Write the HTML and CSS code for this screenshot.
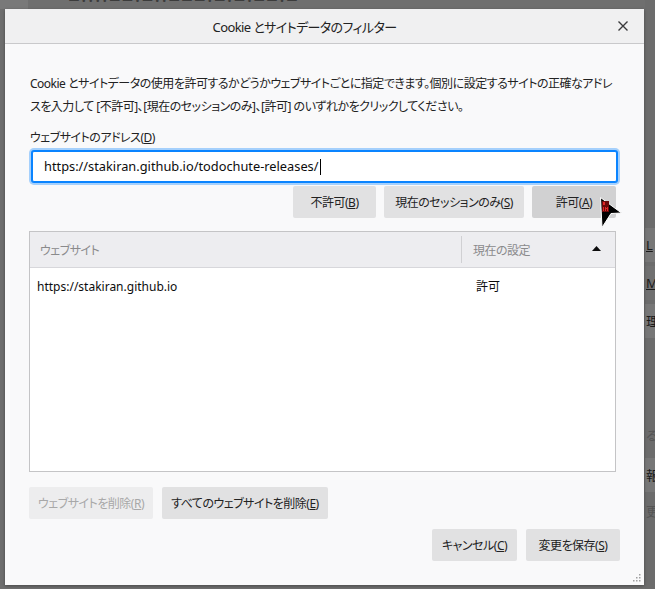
FILE: index.html
```html
<!DOCTYPE html>
<html lang="ja">
<head>
<meta charset="utf-8">
<title>Cookie とサイトデータのフィルター</title>
<link rel="stylesheet" href="styles.css">
</head>
<body>
<div class="backdrop">
  <div class="back-top"><span class="back-top-text">ー・・・・ーー・ー・・ーーー・ー・ー・ーー・ー</span></div>
  <div class="back-strip">
    <div class="band b1"><u>L</u></div>
    <div class="band b2"><u>M</u></div>
    <div class="band b3">理</div>
    <div class="band b4">る</div>
    <div class="band b5">報</div>
    <div class="band b6">更(</div>
  </div>
</div>

<div class="page">
  <div class="dialog">
    <div class="dialog-header">
      <span class="dialog-title">Cookie とサイトデータのフィルター</span>
      <span class="close">
        <svg width="12" height="12" viewBox="0 0 12 12"><path d="M1.5 1.5 L10.5 10.5 M10.5 1.5 L1.5 10.5" stroke="#3a3a3c" stroke-width="1.4" fill="none"/></svg>
      </span>
    </div>
    <div class="dialog-body">
      <p class="desc">Cookie とサイトデータの使用を許可するかどうかウェブサイトごとに指定できます。個別に設定するサイトの正確なアドレスを入力して [不許可]、[現在のセッションのみ]、[許可] のいずれかをクリックしてください。</p>
      <label class="label">ウェブサイトのアドレス(<u>D</u>)</label>
      <div class="input">https://stakiran.github.io/todochute-releases/<span class="caret"></span></div>
      <div class="btn-row right">
        <span class="btn b-deny">不許可(<u>B</u>)</span>
        <span class="btn b-session">現在のセッションのみ(<u>S</u>)</span>
        <span class="btn b-allow hover">許可(<u>A</u>)</span>
      </div>
      <div class="table">
        <div class="thead">
          <div class="th col-site">ウェブサイト</div>
          <div class="th col-status">現在の設定<span class="sort">
            <svg width="9" height="5" viewBox="0 0 9 5"><path d="M0 5 L4.5 0 L9 5 Z" fill="#0c0c0d"/></svg></span></div>
        </div>
        <div class="tbody">
          <div class="tr">
            <div class="td col-site">https://stakiran.github.io</div>
            <div class="td col-status">許可</div>
          </div>
        </div>
      </div>
      <div class="btn-row left">
        <span class="btn disabled">ウェブサイトを削除(<u>R</u>)</span>
        <span class="btn">すべてのウェブサイトを削除(<u>E</u>)</span>
      </div>
      <div class="btn-row footer">
        <span class="btn b-cancel">キャンセル(<u>C</u>)</span>
        <span class="btn b-save">変更を保存(<u>S</u>)</span>
      </div>
    </div>
    <span class="grip">
      <svg width="8" height="8" viewBox="0 0 8 8" fill="#a0a0a0"><rect x="6" y="0" width="1.5" height="1.5"/><rect x="3" y="3" width="1.5" height="1.5"/><rect x="6" y="3" width="1.5" height="1.5"/><rect x="0" y="6" width="1.5" height="1.5"/><rect x="3" y="6" width="1.5" height="1.5"/><rect x="6" y="6" width="1.5" height="1.5"/></svg>
    </span>
  </div>
</div>

<svg class="cursor" width="26" height="34" viewBox="0 0 26 34">
  <path d="M1.5 1.5 L22.5 17 L12 17.5 L3 31.5 Z" fill="#000" stroke="#fff" stroke-width="1"/>
  <rect x="3" y="5" width="7" height="11" fill="#6a0808"/>
  <rect x="4" y="6" width="2" height="3" fill="#e02828"/>
  <rect x="4" y="11" width="1" height="4" fill="#e02828"/>
  <rect x="6" y="11" width="1" height="4" fill="#e02828"/>
  <rect x="8" y="11" width="1" height="4" fill="#e02828"/>
  <rect x="7" y="12" width="1" height="1" fill="#e02828"/>
</svg>
</body>
</html>
```

FILE: styles.css
```css
html, body {
  margin: 0;
  padding: 0;
}
body {
  width: 655px;
  height: 589px;
  overflow: hidden;
  background: #6e6e6e;
  position: relative;
  font-family: "Noto Sans", "Noto Sans CJK JP", sans-serif;
  font-feature-settings: "palt";
  color: #0c0c0d;
}

/* underlying page seen through the overlay */
.backdrop {
  position: absolute;
  inset: 0;
}
.back-top {
  height: 9px;
  background: #6f6f6f;
  border-left: 28px solid #797979;
  overflow: hidden;
}
.back-top-text {
  display: block;
  margin: -8px 0 0 40px;
  font-size: 12px;
  color: #3c3c3c;
  letter-spacing: 1px;
}
.back-strip {
  position: absolute;
  left: 645px;
  top: 0;
  width: 10px;
  height: 589px;
  background: #6c6c6c;
  font-size: 13px;
  color: #1a1a1a;
  overflow: hidden;
}
.band {
  position: absolute;
  left: 0;
  width: 20px;
  height: 34px;
  line-height: 34px;
  padding-left: 1px;
  white-space: nowrap;
}
.b1 { top: 228px; background: #777; }
.b2 { top: 266px; background: #707070; }
.b3 { top: 304px; background: #777; }
.b4 { top: 418px; color: #555; }
.b5 { top: 458px; background: #777; }
.b6 { top: 494px; color: #555; }

/* dialog */
.page {
  position: relative;
  padding: 9px 0 0 5px;
}
.dialog {
  position: relative;
  width: 639px;
  height: 576px;
  background: #f9f9fa;
  box-shadow: 0 1px 3px rgba(0,0,0,0.35);
  box-sizing: border-box;
}
.dialog-header {
  height: 34px;
  background: #f0f0f1;
  border-bottom: 1px solid #c9c9cb;
  display: flex;
  align-items: center;
  justify-content: center;
  position: relative;
}
.dialog-title {
  font-size: 13px;
  letter-spacing: -0.6px;
  color: #222;
  margin-left: -40px;
}
.close {
  position: absolute;
  right: 15px;
  top: 11px;
  width: 12px;
  height: 12px;
  display: flex;
}

.dialog-body {
  padding: 28px 27px 0 25px;
  display: flex;
  flex-direction: column;
}
.desc {
  margin: 0 -1px 0 0;
  font-size: 12px;
  letter-spacing: -0.5px;
  line-height: 23px;
  color: #222;
}
.label {
  margin-top: 11px;
  font-size: 12px;
  letter-spacing: -0.5px;
  line-height: 18px;
  color: #222;
}
.input {
  margin: 4px 0 0 2px;
  height: 31px;
  box-sizing: border-box;
  border: 1px solid #0a84ff;
  border-radius: 2px;
  box-shadow: 0 0 0 1px #0a84ff, 0 0 0 3px rgba(10,132,255,0.35);
  background: #fff;
  font-size: 12.8px;
  line-height: 29px;
  padding-left: 11px;
  color: #0c0c0d;
  display: flex;
  align-items: center;
}
.caret {
  display: inline-block;
  width: 1px;
  height: 16px;
  background: #000;
  margin-left: 1px;
}

.btn-row {
  display: flex;
  gap: 8px;
}
.btn-row.right {
  justify-content: flex-end;
  margin-top: 4px;
  margin-right: 1px;
}
.btn-row.left {
  margin-top: 15px;
  margin-left: -1px;
  gap: 9px;
}
.btn-row.footer {
  justify-content: flex-end;
  margin-top: 10px;
  margin-right: -3px;
  gap: 9px;
}
.btn {
  height: 32px;
  box-sizing: border-box;
  padding: 0 9px;
  display: flex;
  align-items: center;
  background: #e1e1e2;
  border-radius: 2px;
  font-size: 12px;
  letter-spacing: -0.5px;
  color: #222;
  white-space: nowrap;
}
.btn.hover {
  background: #d1d1d2;
}
.btn.disabled {
  background: #ededee;
  color: #a8a8a8;
}
.b-deny {
  width: 83px;
  justify-content: center;
}
.b-session {
  width: 140px;
  justify-content: center;
}
.b-allow {
  width: 84px;
  justify-content: center;
}
.b-cancel {
  width: 85px;
  justify-content: center;
}
.b-save {
  width: 94px;
  justify-content: center;
}

.table {
  margin-top: 13px;
  margin-left: -1px;
  margin-right: 1px;
  height: 241px;
  box-sizing: border-box;
  border: 1px solid #c4c4c6;
  background: #fff;
  display: flex;
  flex-direction: column;
}
.thead {
  height: 35px;
  flex: none;
  display: flex;
  background: #ededf0;
  border-bottom: 1px solid #d7d7db;
}
.th {
  display: flex;
  align-items: center;
  font-size: 12px;
  letter-spacing: -0.5px;
  color: #8a8a8c;
}
.thead .col-site {
  flex: 1;
  padding-left: 10px;
  margin: 4px 0;
  border-right: 1px solid #d0d0d3;
}
.thead .col-status {
  width: 153px;
  padding-left: 11px;
  box-sizing: border-box;
  position: relative;
}
.sort {
  position: absolute;
  right: 14px;
  top: 14px;
  display: flex;
}
.tr {
  display: flex;
  height: 36px;
  align-items: center;
}
.td {
  font-size: 12px;
  color: #0c0c0d;
}
.tbody .col-site {
  flex: 1;
  padding-left: 7px;
}
.tbody .col-status {
  width: 153px;
  padding-left: 14px;
  box-sizing: border-box;
}

.grip {
  position: absolute;
  right: 3px;
  bottom: 3px;
  display: flex;
}

.cursor {
  position: absolute;
  left: 599px;
  top: 196px;
}
```
